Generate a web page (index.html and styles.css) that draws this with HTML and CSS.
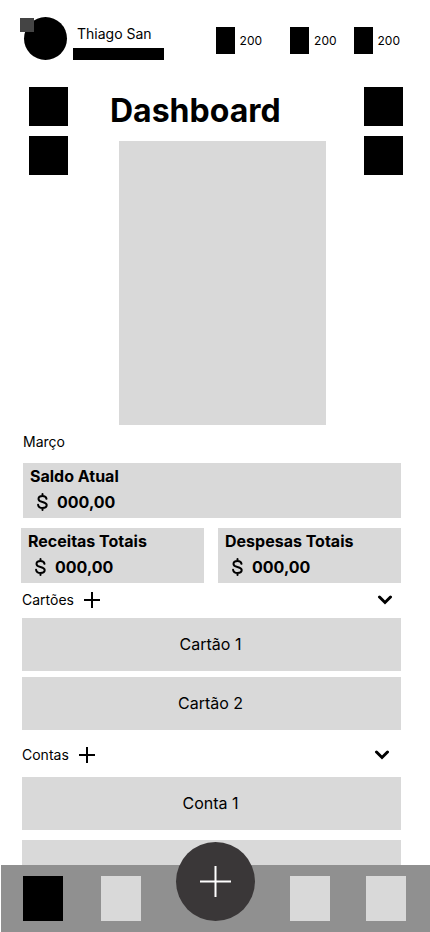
FILE: index.html
```html
<!DOCTYPE html>
<html lang="pt-BR">
<head>
<meta charset="utf-8">
<meta name="viewport" content="width=device-width, initial-scale=1">
<title>Dashboard</title>
<link rel="stylesheet" href="styles.css">
</head>
<body>
<svg class="sprite" aria-hidden="true">
  <symbol id="dollar" viewBox="0 0 12 18"><path d="M6.500 1v2M6.500 15v2M10.500 5.800C10.200 4 8.800 3 6.500 3 4.200 3 2.500 4.100 2.500 5.900 2.500 7.900 4.200 8.400 6.500 8.900 9 9.500 10.700 10.200 10.700 12.100 10.700 13.900 9 15 6.500 15 4.100 15 2.400 13.800 2.100 11.800"/></symbol>
  <symbol id="plus" viewBox="0 0 16 16"><path d="M8 0v16M0 8h16"/></symbol>
  <symbol id="chevron" viewBox="0 0 16 10"><path d="M2.500 2 8 7.500 13.500 2"/></symbol>
</svg>
<div class="app">
  <main class="content">
    <header class="header">
      <div class="avatar"><span class="avatar-badge"></span></div>
      <div class="user">
        <span class="user-name">Thiago San</span>
        <span class="user-bar"></span>
      </div>
      <ul class="stats">
        <li class="stat">200</li>
        <li class="stat stat-wide">200</li>
        <li class="stat">200</li>
      </ul>
    </header>

    <section class="hero">
      <div class="shortcuts">
        <button class="shortcut" aria-label="Atalho 1"></button>
        <button class="shortcut" aria-label="Atalho 2"></button>
      </div>
      <div class="hero-main">
        <h1 class="title">Dashboard</h1>
        <div class="figure"></div>
      </div>
      <div class="shortcuts">
        <button class="shortcut" aria-label="Atalho 3"></button>
        <button class="shortcut" aria-label="Atalho 4"></button>
      </div>
    </section>

    <section class="summary">
      <p class="month">Março</p>
      <article class="balance">
        <h2 class="balance-title">Saldo Atual</h2>
        <p class="amount"><svg class="dollar"><use href="#dollar"/></svg>000,00</p>
      </article>
      <div class="totals">
        <article class="balance">
          <h2 class="balance-title">Receitas Totais</h2>
          <p class="amount"><svg class="dollar"><use href="#dollar"/></svg>000,00</p>
        </article>
        <article class="balance">
          <h2 class="balance-title">Despesas Totais</h2>
          <p class="amount"><svg class="dollar"><use href="#dollar"/></svg>000,00</p>
        </article>
      </div>
    </section>

    <section class="group">
      <div class="group-head">
        <h2 class="group-title">Cartões</h2>
        <button class="icon-button" aria-label="Adicionar cartão"><svg class="plus"><use href="#plus"/></svg></button>
        <button class="icon-button toggle" aria-label="Recolher cartões"><svg class="chevron"><use href="#chevron"/></svg></button>
      </div>
      <ul class="list">
        <li class="row">Cartão 1</li>
        <li class="row">Cartão 2</li>
      </ul>
    </section>

    <section class="group accounts">
      <div class="group-head">
        <h2 class="group-title">Contas</h2>
        <button class="icon-button" aria-label="Adicionar conta"><svg class="plus"><use href="#plus"/></svg></button>
        <button class="icon-button toggle" aria-label="Recolher contas"><svg class="chevron"><use href="#chevron"/></svg></button>
      </div>
      <ul class="list">
        <li class="row">Conta 1</li>
        <li class="row"></li>
      </ul>
    </section>
  </main>

  <nav class="nav">
    <div class="nav-group">
      <button class="nav-item active" aria-label="Início"></button>
      <button class="nav-item" aria-label="Seção 2"></button>
    </div>
    <button class="fab" aria-label="Adicionar"><svg class="fab-plus" viewBox="0 0 31 31"><path d="M15.500 0v31M0 15.500h31"/></svg></button>
    <div class="nav-group">
      <button class="nav-item" aria-label="Seção 3"></button>
      <button class="nav-item" aria-label="Seção 4"></button>
    </div>
  </nav>
</div>
</body>
</html>
```
FILE: styles.css
```css
* {
  box-sizing: border-box;
  margin: 0;
  padding: 0;
}

body {
  background: #fff;
  color: #000;
  font-family: Inter, "Liberation Sans", sans-serif;
  font-size: 14px;
  line-height: 18px;
}

ul {
  list-style: none;
}

button {
  border: 0;
  background: none;
  cursor: pointer;
}

svg {
  display: block;
  fill: none;
  stroke: currentColor;
}

.sprite {
  position: absolute;
  width: 0;
  height: 0;
}

.app {
  display: flex;
  flex-direction: column;
  height: 100vh;
}

.content {
  flex: 1;
  min-height: 0;
  overflow-y: auto;
  scrollbar-width: none;
}

.header {
  display: flex;
  align-items: flex-start;
  padding: 17px 30px 0 24px;
}

.avatar {
  position: relative;
  width: 43px;
  height: 43px;
  border-radius: 50%;
  background: #000;
}

.avatar-badge {
  position: absolute;
  top: 1px;
  left: -4px;
  width: 14px;
  height: 14px;
  background: #444;
}

.user {
  width: 91px;
  margin-left: 6px;
  padding-top: 8px;
}

.user-name {
  display: block;
  padding-left: 4px;
  white-space: nowrap;
}

.user-bar {
  display: block;
  height: 12px;
  margin-top: 5px;
  background: #000;
}

.stats {
  display: flex;
  margin: 10px 0 0 auto;
}

.stat {
  display: flex;
  align-items: center;
  gap: 5px;
  font-size: 12px;
}

.stat::before {
  content: "";
  width: 19px;
  height: 27px;
  background: #000;
}

.stat-wide {
  margin: 0 17px 0 28px;
}

.hero {
  display: flex;
  justify-content: space-between;
  padding: 27px 27px 0 29px;
}

.shortcuts {
  display: flex;
  flex-direction: column;
  gap: 10px;
}

.shortcut {
  width: 39px;
  height: 39px;
  background: #000;
}

.hero-main {
  flex: 1;
  padding: 4px 38px 0 42px;
}

.title {
  font-size: 32px;
  line-height: 40px;
  font-weight: 700;
}

.figure {
  height: 284px;
  margin: 10px 0 0 9px;
  background: #d9d9d9;
}

.summary {
  padding: 8px 29px 0 23px;
}

.month {
  margin-bottom: 12px;
}

.balance {
  height: 55px;
  padding: 2px 7px;
  background: #d9d9d9;
  font-size: 16px;
}

.balance-title {
  font-size: 16px;
  line-height: 22px;
  font-weight: 700;
}

.amount {
  display: flex;
  align-items: center;
  gap: 9px;
  padding: 4px 0 0 6px;
  line-height: 22px;
  font-weight: 700;
}

.dollar {
  width: 12px;
  height: 18px;
  stroke-width: 2;
  stroke-linecap: round;
}

.totals {
  display: grid;
  grid-template-columns: 1fr 1fr;
  gap: 14px;
  margin: 10px 0 0 -2px;
}

.group {
  padding: 8px 29px 0 22px;
}

.accounts {
  padding-top: 16px;
}

.group-head {
  display: flex;
  align-items: center;
  gap: 10px;
  margin-bottom: 9px;
}

.accounts .group-head {
  margin-bottom: 13px;
}

.group-title {
  font-size: 14px;
  font-weight: 400;
}

.plus {
  width: 16px;
  height: 16px;
  stroke-width: 2;
}

.toggle {
  margin: 0 8px 0 auto;
}

.accounts .toggle {
  margin-right: 11px;
}

.chevron {
  width: 16px;
  height: 10px;
  stroke-width: 3;
  stroke-linecap: round;
}

.list {
  display: grid;
  gap: 6px;
}

.accounts .list {
  gap: 10px;
}

.row {
  display: grid;
  place-items: center;
  height: 53px;
  padding: 0 2px 2px 0;
  background: #d9d9d9;
  font-size: 16px;
}

.nav {
  position: relative;
  display: flex;
  align-items: flex-end;
  justify-content: space-between;
  height: 67px;
  margin-left: 1px;
  padding: 0 24px 11px 22px;
  background: #909090;
}

.nav-group {
  display: flex;
  gap: 38px;
}

.fab + .nav-group {
  gap: 36px;
}

.nav-item {
  width: 40px;
  height: 45px;
  background: #d9d9d9;
}

.nav-item.active {
  background: #000;
}

.fab {
  display: grid;
  place-items: center;
  width: 79px;
  height: 79px;
  border-radius: 50%;
  background: #3a3738;
  color: #fff;
}

.fab-plus {
  width: 31px;
  height: 31px;
  stroke-width: 2;
}
```
